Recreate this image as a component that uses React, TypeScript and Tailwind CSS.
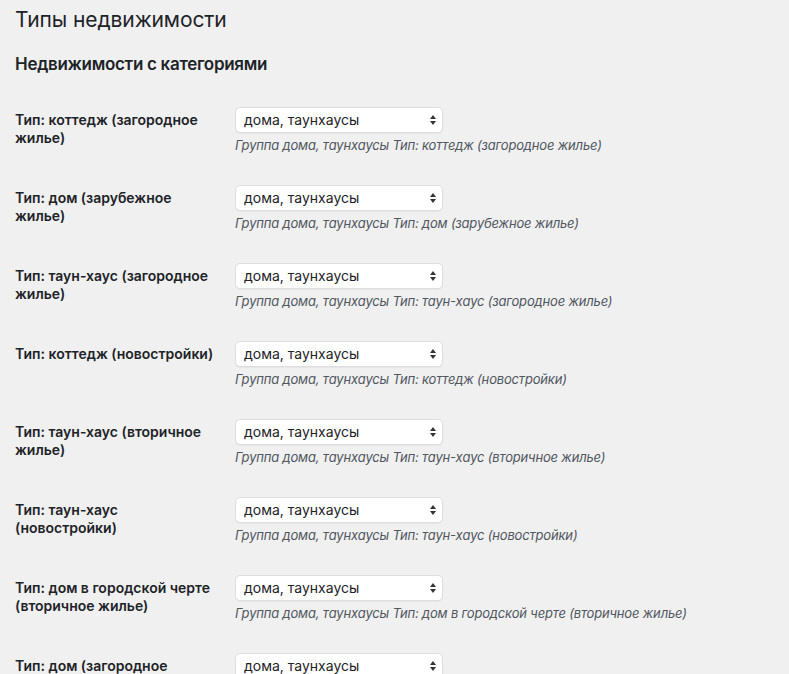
import React from "react";

interface Row {
  label: string[];
  type: string;
}

const rows: Row[] = [
  { label: ["Тип: коттедж (загородное", "жилье)"], type: "коттедж (загородное жилье)" },
  { label: ["Тип: дом (зарубежное", "жилье)"], type: "дом (зарубежное жилье)" },
  { label: ["Тип: таун-хаус (загородное", "жилье)"], type: "таун-хаус (загородное жилье)" },
  { label: ["Тип: коттедж (новостройки)"], type: "коттедж (новостройки)" },
  { label: ["Тип: таун-хаус (вторичное", "жилье)"], type: "таун-хаус (вторичное жилье)" },
  { label: ["Тип: таун-хаус", "(новостройки)"], type: "таун-хаус (новостройки)" },
  { label: ["Тип: дом в городской черте", "(вторичное жилье)"], type: "дом в городской черте (вторичное жилье)" },
  { label: ["Тип: дом (загородное", "жилье)"], type: "дом (загородное жилье)" },
];

const GROUP = "дома, таунхаусы";

const SelectArrows = () => (
  <svg
    width="8"
    height="12"
    viewBox="0 0 8 12"
    className="pointer-events-none absolute right-[6px] top-1/2 -translate-y-1/2"
  >
    <path d="M4 1 L7 5 L1 5 Z" fill="#333" />
    <path d="M4 11 L7 7 L1 7 Z" fill="#333" />
  </svg>
);

const FieldRow: React.FC<{ row: Row }> = ({ row }) => (
  <div className="flex">
    <div className="w-[220px] shrink-0 pt-[20px] pr-[20px] text-[14px] font-semibold leading-[18px] text-[#1d2327]">
      {row.label.map((line, i) => (
        <div key={i}>{line}</div>
      ))}
    </div>
    <div className="pt-[16px] pb-[15px]">
      <div className="relative w-[208px]">
        <select
          defaultValue={GROUP}
          className="block h-[26px] w-full appearance-none rounded-[5px] border border-[#dedede] bg-white pl-[8px] pr-[20px] text-[14px] leading-[24px] text-[#1d2327] shadow-[0_1px_1px_rgba(0,0,0,0.04)] outline-none"
        >
          <option value={GROUP}>{GROUP}</option>
          <option value="квартиры">квартиры</option>
          <option value="участки">участки</option>
        </select>
        <SelectArrows />
      </div>
      <p className="mt-[4px] text-[13px] italic leading-[17px] tracking-[-0.18px] text-[#50575e]">
        Группа {GROUP} Тип: {row.type}
      </p>
    </div>
  </div>
);

export default function App() {
  return (
    <div
      className="min-h-screen bg-[#f0f0f1] pl-[15px]"
      style={{ fontFamily: "Inter, 'Noto Sans', sans-serif" }}
    >
      <h1 className="pt-[5px] text-[21px] font-normal leading-[30px] tracking-[-0.1px] text-[#1d2327]">
        Типы недвижимости
      </h1>
      <h2 className="mt-[18px] mb-[16px] text-[17px] font-semibold leading-[22px] tracking-[-0.3px] text-[#1d2327]">
        Недвижимости с категориями
      </h2>
      <div>
        {rows.map((row, i) => (
          <FieldRow key={i} row={row} />
        ))}
      </div>
    </div>
  );
}
